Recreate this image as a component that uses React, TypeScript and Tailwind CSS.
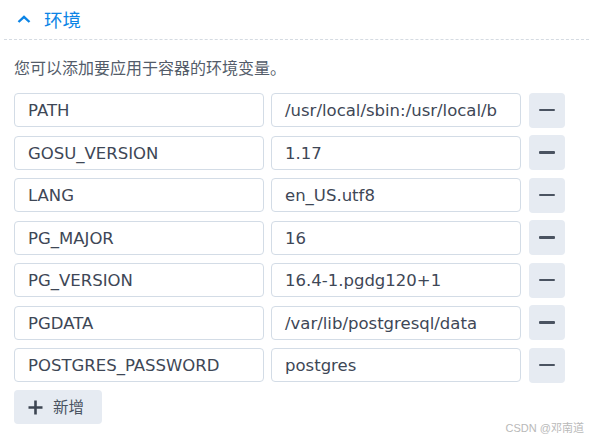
const envVars = [
  { name: 'PATH', value: '/usr/local/sbin:/usr/local/b' },
  { name: 'GOSU_VERSION', value: '1.17' },
  { name: 'LANG', value: 'en_US.utf8' },
  { name: 'PG_MAJOR', value: '16' },
  { name: 'PG_VERSION', value: '16.4-1.pgdg120+1' },
  { name: 'PGDATA', value: '/var/lib/postgresql/data' },
  { name: 'POSTGRES_PASSWORD', value: 'postgres' },
];

const latin = "font-['DejaVu_Sans','Noto_Sans_CJK_SC',sans-serif]";

function EnvRow({ name, value }: { name: string; value: string }) {
  return (
    <div className="flex items-center h-[34px]">
      <div className="w-[250px] h-full border border-[#d3dce6] rounded-[4px] pl-[13px] pr-3 pt-[3px] flex items-center overflow-hidden">
        <span className={`${latin} text-[16.5px] text-[#3e4756] whitespace-nowrap`}>{name}</span>
      </div>
      <div className="ml-[7px] w-[250px] h-full border border-[#d3dce6] rounded-[4px] pl-[13px] pr-[10px] pt-[3px] flex items-center overflow-hidden">
        <span className={`${latin} text-[16.5px] text-[#3e4756] whitespace-nowrap`}>{value}</span>
      </div>
      <button className="ml-[8px] w-[36px] h-[35px] bg-[#e6ebf2] rounded-[4px] flex items-center justify-center">
        <span className="block w-[16px] h-[2.5px] rounded-[1px] bg-[#4a5361]" />
      </button>
    </div>
  );
}

export default function App() {
  return (
    <div className="relative w-[589px] h-[439px] bg-white font-['Noto_Sans_CJK_SC','Noto_Sans',sans-serif] overflow-hidden">
      {/* header */}
      <div className="ml-[4px] h-[40px] flex items-center border-b border-dashed border-[#d5dbe2] pl-[13px]">
        <svg width="14" height="8" viewBox="0 0 14 8" className="mt-[-1px]">
          <path d="M1.5 7 L7 1.8 L12.5 7" fill="none" stroke="#0b84e6" strokeWidth="2.4" strokeLinejoin="miter" />
        </svg>
        <span className="ml-[13px] text-[18.5px] text-[#0b84e6] leading-none mt-[-1px]">环境</span>
      </div>

      <div className="px-[14px]">
        <p className="mt-[17px] text-[16px] leading-[20px] text-[#535c69]">您可以添加要应用于容器的环境变量。</p>

        <div className="mt-[16px] flex flex-col gap-[8.5px]">
          {envVars.map((v) => (
            <EnvRow key={v.name} name={v.name} value={v.value} />
          ))}
        </div>

        <button className="mt-[8px] w-[88px] h-[34px] bg-[#e6ebf2] rounded-[4px] flex items-center pl-[14px]">
          <svg width="15" height="15" viewBox="0 0 15 15">
            <path d="M7.5 0.5 V14.5 M0.5 7.5 H14.5" stroke="#3c4552" strokeWidth="2.6" fill="none" />
          </svg>
          <span className="ml-[10px] text-[15.5px] text-[#4a5361]">新增</span>
        </button>
      </div>

      {/* watermark */}
      <span className="absolute right-[5px] bottom-[5px] text-[11px] leading-none text-[#b9b9b9] font-['Liberation_Sans','Noto_Sans_CJK_SC',sans-serif]">
        CSDN @邓南道
      </span>
    </div>
  );
}
